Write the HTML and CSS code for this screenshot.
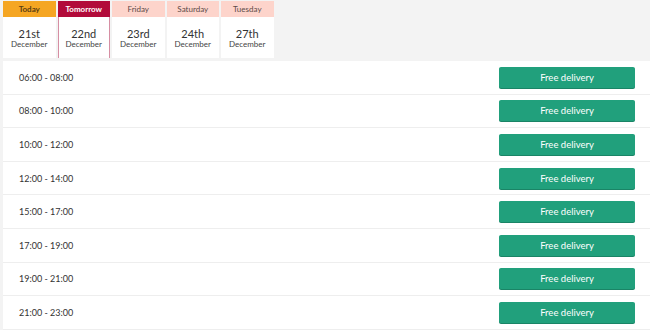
FILE: index.html
```html
<!DOCTYPE html>
<html lang="en">
<head>
    <meta charset="UTF-8">
    <meta name="viewport" content="width=device-width, initial-scale=1.0">
    <title>Delivery slots</title>
    <link rel="stylesheet" href="styles.css">
</head>
<body>

    <div class="days">
        <div class="day today">
            <div class="day-name">Today</div>
            <div class="day-date"><span class="num">21st</span><span class="month">December</span></div>
        </div>
        <div class="day selected">
            <div class="day-name">Tomorrow</div>
            <div class="day-date"><span class="num">22nd</span><span class="month">December</span></div>
        </div>
        <div class="day">
            <div class="day-name">Friday</div>
            <div class="day-date"><span class="num">23rd</span><span class="month">December</span></div>
        </div>
        <div class="day">
            <div class="day-name">Saturday</div>
            <div class="day-date"><span class="num">24th</span><span class="month">December</span></div>
        </div>
        <div class="day">
            <div class="day-name">Tuesday</div>
            <div class="day-date"><span class="num">27th</span><span class="month">December</span></div>
        </div>
    </div>

    <div class="slots">
        <div class="slot"><span class="time">06:00 - 08:00</span><button class="btn">Free delivery</button></div>
        <div class="slot"><span class="time">08:00 - 10:00</span><button class="btn">Free delivery</button></div>
        <div class="slot"><span class="time">10:00 - 12:00</span><button class="btn">Free delivery</button></div>
        <div class="slot"><span class="time">12:00 - 14:00</span><button class="btn">Free delivery</button></div>
        <div class="slot"><span class="time">15:00 - 17:00</span><button class="btn">Free delivery</button></div>
        <div class="slot"><span class="time">17:00 - 19:00</span><button class="btn">Free delivery</button></div>
        <div class="slot"><span class="time">19:00 - 21:00</span><button class="btn">Free delivery</button></div>
        <div class="slot"><span class="time">21:00 - 23:00</span><button class="btn">Free delivery</button></div>
    </div>

</body>
</html>
```

FILE: styles.css
```css
body {
    margin: 0;
    padding: 1px 0 0 3px;
    background: #f3f3f3;
    font-family: Lato, "Open Sans", sans-serif;
    color: #333;
}

.days {
    display: flex;
    gap: 2px;
}

.day {
    width: 52.5px;
    background: white;
}

.day-name {
    height: 16px;
    line-height: 16px;
    text-align: center;
    font-size: 8px;
    background: #fdd4cb;
    color: #5b4a47;
}

.today .day-name {
    background: #f5a623;
    color: #5a3d12;
    font-weight: bold;
}

.selected .day-name {
    background: #b20b3a;
    color: white;
    font-weight: bold;
}

.day-date {
    height: 41px;
    display: flex;
    flex-direction: column;
    align-items: center;
    justify-content: center;
    padding-top: 2px;
    box-sizing: border-box;
}

.selected .day-date {
    border-left: 1px solid #d68ea3;
    border-right: 1px solid #d68ea3;
}

.num {
    font-size: 11px;
    line-height: 12px;
    color: #333;
}

.month {
    font-size: 8px;
    line-height: 9px;
    color: #444;
}

.slots {
    margin-top: 3px;
    background: white;
}

.slot {
    height: 33.6px;
    display: flex;
    align-items: center;
    justify-content: space-between;
    padding: 0 15px 0 16px;
    border-bottom: 1px solid #eeeeee;
    box-sizing: border-box;
}

.time {
    font-size: 9px;
    color: #333;
}

.btn {
    width: 136px;
    height: 21px;
    background: #21a07c;
    color: white;
    border: none;
    border-radius: 2px;
    box-shadow: 0 1px 0 #1a8466;
    font-family: Lato, "Open Sans", sans-serif;
    font-size: 9.5px;
    padding: 0;
    cursor: pointer;
}
```
